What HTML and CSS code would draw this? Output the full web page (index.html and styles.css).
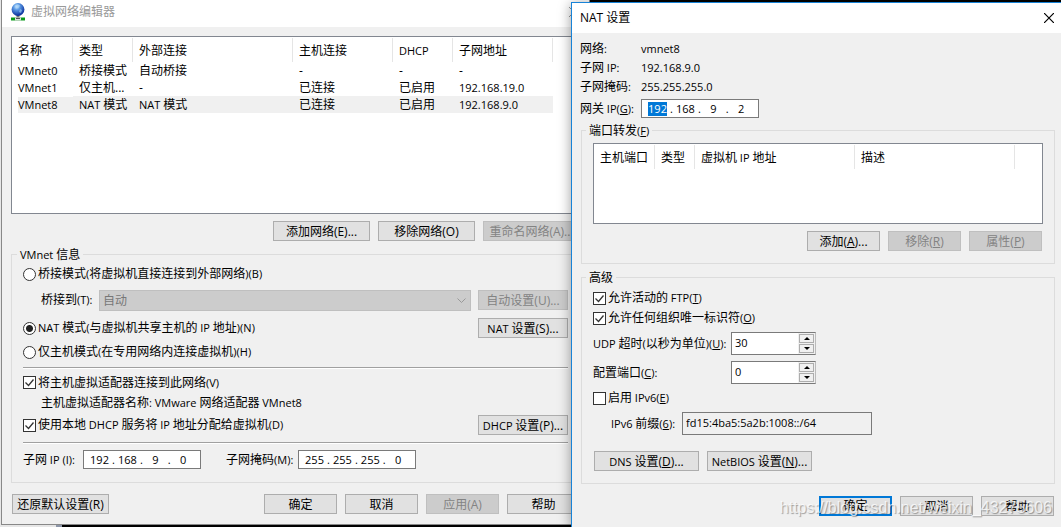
FILE: index.html
```html
<!DOCTYPE html>
<html lang="zh-CN">
<head>
<meta charset="utf-8">
<title>虚拟网络编辑器</title>
<link rel="stylesheet" href="styles.css">
</head>
<body>
<div class="desktop">
  <main class="window editor">
    <header class="titlebar">
      <svg class="app-icon" width="16" height="18" viewBox="0 0 16 18" aria-hidden="true">
        <defs>
          <radialGradient id="globe" cx="40%" cy="28%" r="70%">
            <stop offset="0" stop-color="#d4ecff"/><stop offset=".35" stop-color="#5b9be6"/><stop offset="1" stop-color="#0a2f9c"/>
          </radialGradient>
        </defs>
        <path d="M1 16h14" stroke="#0c9a1c" stroke-width="3"/>
        <path d="M8 11v5" stroke="#777" stroke-width="3"/>
        <path d="M5 16h6" stroke="#ddd" stroke-width="3"/>
        <path d="M6 15.5h4" stroke="#555" stroke-width="1"/>
        <circle cx="8" cy="6.5" r="6.4" fill="url(#globe)"/>
        <path d="M5 2.5q3-2 5 0l-1 2-3 1zM10 6l2 1-1 3-2-1z" fill="#a9d4f7" opacity=".6"/>
      </svg>
      <h1>虚拟网络编辑器</h1>
      <button class="close" aria-label="关闭"><svg width="10" height="10" viewBox="0 0 10 10"><path d="M0 0l10 10M10 0L0 10" stroke="currentColor"/></svg></button>
    </header>
    <div class="editor-body">
      <div class="list networks">
        <table>
          <thead><tr><th class="w-60">名称</th><th class="w-60">类型</th><th class="w-160">外部连接</th><th class="w-100">主机连接</th><th class="w-60"><span class="en">DHCP</span></th><th class="w-100">子网地址</th></tr></thead>
          <tbody>
            <tr><td><span class="en">VMnet0</span></td><td>桥接模式</td><td>自动桥接</td><td>-</td><td>-</td><td>-</td></tr>
            <tr><td><span class="en">VMnet1</span></td><td>仅主机...</td><td>-</td><td>已连接</td><td>已启用</td><td><span class="en">192.168.19.0</span></td></tr>
            <tr class="selected"><td><span class="en">VMnet8</span></td><td><span class="en">NAT </span>模式</td><td><span class="en">NAT </span>模式</td><td>已连接</td><td>已启用</td><td><span class="en">192.168.9.0</span></td></tr>
          </tbody>
        </table>
      </div>
      <div class="actions list-actions">
        <button class="btn wide">添加网络<span class="en">(E)...</span></button>
        <button class="btn wide">移除网络<span class="en">(O)</span></button>
        <button class="btn wide" disabled>重命名网络<span class="en">(A)...</span></button>
      </div>
      <fieldset class="group vmnet">
        <legend><span class="en">VMnet </span>信息</legend>
        <div class="row bridge-mode"><label class="choice"><input type="radio" name="mode">桥接模式<span class="en">(</span>将虚拟机直接连接到外部网络<span class="en">)(B)</span></label></div>
        <div class="row bridge-target">
          <label for="bridge">桥接到<span class="en">(T):</span></label>
          <select id="bridge" disabled><option>自动</option></select>
          <button class="btn side" disabled>自动设置<span class="en">(U)...</span></button>
        </div>
        <div class="row">
          <label class="choice"><input type="radio" name="mode" checked><span><span class="en">NAT </span>模式<span class="en">(</span>与虚拟机共享主机的<span class="en"> IP </span>地址<span class="en">)(N)</span></span></label>
          <button class="btn side"><span class="en">NAT </span>设置<span class="en">(S)...</span></button>
        </div>
        <div class="row host-mode"><label class="choice"><input type="radio" name="mode">仅主机模式<span class="en">(</span>在专用网络内连接虚拟机<span class="en">)(H)</span></label></div>
        <hr>
        <div class="row adapter"><label class="choice"><input type="checkbox" checked>将主机虚拟适配器连接到此网络<span class="en">(V)</span></label></div>
        <p class="adapter-name">主机虚拟适配器名称<span class="en">: VMware </span>网络适配器<span class="en"> VMnet8</span></p>
        <div class="row">
          <label class="choice"><input type="checkbox" checked><span>使用本地<span class="en"> DHCP </span>服务将<span class="en"> IP </span>地址分配给虚拟机<span class="en">(D)</span></span></label>
          <button class="btn side"><span class="en">DHCP </span>设置<span class="en">(P)...</span></button>
        </div>
        <hr class="lower">
        <div class="row subnet">
          <label for="ip1">子网<span class="en"> IP (I):</span></label>
          <div class="ip"><input id="ip1" value="192">.<input aria-label="子网 IP 2" value="168">.<input aria-label="子网 IP 3" value="9">.<input aria-label="子网 IP 4" value="0"></div>
          <label class="mask" for="mask1">子网掩码<span class="en">(M):</span></label>
          <div class="ip"><input id="mask1" value="255">.<input aria-label="子网掩码 2" value="255">.<input aria-label="子网掩码 3" value="255">.<input aria-label="子网掩码 4" value="0"></div>
        </div>
      </fieldset>
      <footer class="actions editor-footer">
        <button class="btn wide restore">还原默认设置<span class="en">(R)</span></button>
        <button class="btn">确定</button>
        <button class="btn">取消</button>
        <button class="btn" disabled>应用<span class="en">(A)</span></button>
        <button class="btn">帮助</button>
      </footer>
    </div>
  </main>

  <section class="window nat" aria-labelledby="nat-title">
    <header class="titlebar">
      <h2 id="nat-title">NAT 设置</h2>
      <button class="close" aria-label="关闭"><svg width="10" height="10" viewBox="0 0 10 10"><path d="M0 0l10 10M10 0L0 10" stroke="currentColor" stroke-width="1.2"/></svg></button>
    </header>
    <div class="nat-body">
      <dl class="facts">
        <dt>网络<span class="en">:</span></dt><dd class="en">vmnet8</dd>
        <dt>子网<span class="en"> IP:</span></dt><dd class="en">192.168.9.0</dd>
        <dt>子网掩码<span class="en">:</span></dt><dd class="en">255.255.255.0</dd>
      </dl>
      <div class="row gateway">
        <label for="gw1">网关<span class="en"> IP(<u>G</u>):</span></label>
        <div class="ip"><input id="gw1" class="marked" value="192">.<input aria-label="网关 IP 2" value="168">.<input aria-label="网关 IP 3" value="9">.<input aria-label="网关 IP 4" value="2"></div>
      </div>
      <fieldset class="group forwarding">
        <legend>端口转发<span class="en">(<u>F</u>)</span></legend>
        <div class="list ports">
          <table>
            <thead><tr><th class="w-60">主机端口</th><th class="w-40">类型</th><th class="w-160">虚拟机<span class="en"> IP </span>地址</th><th class="w-160">描述</th></tr></thead>
          </table>
        </div>
        <div class="actions port-actions">
          <button class="btn">添加<span class="en">(<u>A</u>)...</span></button>
          <button class="btn" disabled>移除<span class="en">(<u>R</u>)</span></button>
          <button class="btn" disabled>属性<span class="en">(<u>P</u>)</span></button>
        </div>
      </fieldset>
      <fieldset class="group advanced">
        <legend>高级</legend>
        <div class="row"><label class="choice"><input type="checkbox" checked><span>允许活动的<span class="en"> FTP(<u>T</u>)</span></span></label></div>
        <div class="row"><label class="choice"><input type="checkbox" checked>允许任何组织唯一标识符<span class="en">(<u>O</u>)</span></label></div>
        <div class="row field">
          <label for="udp"><span class="en">UDP </span>超时<span class="en">(</span>以秒为单位<span class="en">)(<u>U</u>):</span></label>
          <div class="spin"><input id="udp" value="30"><div class="steps"><button class="up" aria-label="增加"></button><button class="down" aria-label="减少"></button></div></div>
        </div>
        <div class="row field port">
          <label for="port">配置端口<span class="en">(<u>C</u>):</span></label>
          <div class="spin"><input id="port" value="0"><div class="steps"><button class="up" aria-label="增加"></button><button class="down" aria-label="减少"></button></div></div>
        </div>
        <div class="row ipv6"><label class="choice"><input type="checkbox"><span>启用<span class="en"> IPv6(<u>E</u>)</span></span></label></div>
        <div class="row prefix">
          <label for="prefix"><span class="en">IPv6 </span>前缀<span class="en">(<u>6</u>):</span></label>
          <input id="prefix" class="prefix-box" readonly value="fd15:4ba5:5a2b:1008::/64">
        </div>
        <div class="row extra">
          <button class="btn large"><span class="en">DNS </span>设置<span class="en">(<u>D</u>)...</span></button>
          <button class="btn large"><span class="en">NetBIOS </span>设置<span class="en">(<u>N</u>)...</span></button>
        </div>
      </fieldset>
      <footer class="actions nat-footer">
        <button class="btn default">确定</button>
        <button class="btn">取消</button>
        <button class="btn">帮助</button>
      </footer>
    </div>
  </section>
  <div class="watermark">https://blog.csdn.net/weixin_43275606</div>
</div>
</body>
</html>
```

FILE: styles.css
```css
* { box-sizing: border-box; }

body {
  margin: 0;
  overflow: hidden;
  color: #000;
  font: 12px/16px "Open Sans", "Noto Sans CJK SC", sans-serif;
}

button, input, select { font: inherit; color: inherit; margin: 0; }
h1, h2, p, dl, dd { margin: 0; font-size: 12px; font-weight: 400; }

.en { font-size: 11px; white-space: pre; }
u { text-underline-offset: 1px; }

.desktop {
  position: relative;
  display: grid;
  grid-template-columns: 571px minmax(0, 1fr);
  align-items: start;
  min-height: 100vh;
  overflow: hidden;
  background: linear-gradient(90deg, #e6e6e6 0 56px, #8d96a8 56px 62px, #000 62px);
}

.window { background: #f0f0f0; white-space: nowrap; }
.titlebar { display: flex; align-items: center; background: #fff; }
.close { display: flex; margin-left: auto; padding: 0; border: 0; background: none; }

/* Editor window: its right edge runs under the NAT dialog */
.editor {
  width: calc(100% + 18px);
  margin-left: 1px;
  border: solid #888;
  border-width: 0 1px 1px;
}
.editor .titlebar { height: 27px; padding: 0 10px 3px 8px; color: #999; gap: 5px; }
.editor-body { padding: 9px 9px 10px; }

.list { border: 1px solid #828790; background: #fff; padding-top: 1px; }
.networks { height: 178px; }
.ports { height: 81px; }

table { border-collapse: separate; border-spacing: 0; table-layout: fixed; width: 0; }
th, td { padding: 1px 0 0 6px; text-align: left; font-weight: 400; line-height: 16px; overflow: hidden; }
th { height: 24px; border-right: 1px solid #e5e5e5; }
td { height: 17px; }
.selected td { background: #f0f0f0; }
.selected td:first-child { background-clip: content-box; }
.w-40 { width: 40px; }
.w-60 { width: 60px; }
.w-100 { width: 100px; }
.w-160 { width: 160px; }
th:first-child { width: 61px; }

.actions { display: flex; justify-content: flex-end; gap: 8px; }
.list-actions { margin-top: 7px; }

.btn {
  width: 73px;
  height: 20px;
  padding: 1px 0 0;
  border: 1px solid #adadad;
  background: #e1e1e1;
  line-height: 16px;
  white-space: nowrap;
}
.btn .en:last-child { font-size: 12px; }
.btn.wide { width: 97px; }
.btn.side { width: 90px; margin-left: auto; }
.btn.large { width: 105px; }
.btn.default { padding: 0; border: 2px solid #0078d7; }
.btn:disabled { border-color: #bfbfbf; background: #ccc; color: #838383; }

.group { min-width: 0; margin: 0; border: 1px solid #dcdcdc; }
.group legend { padding: 0 3px; height: 16px; line-height: 18px; margin-left: -7px; }
.vmnet { margin-top: 5px; padding: 0 11px 13px; }
.vmnet legend { margin-left: -6px; }
.row { display: flex; align-items: center; min-height: 20px; }

.choice { display: flex; align-items: center; white-space: nowrap; }
.choice input {
  appearance: none;
  flex: none;
  width: 13px;
  height: 13px;
  margin-right: 2px;
  border: 1px solid #333;
  background: #fff;
}
.choice input[type="radio"] { border-radius: 50%; }
.choice input[type="radio"]:checked { background: radial-gradient(circle, #222 0 3px, #fff 4px); }
.choice input[type="checkbox"]:checked {
  background: #fff url("data:image/svg+xml,%3Csvg xmlns='http://www.w3.org/2000/svg' viewBox='0 0 11 11'%3E%3Cpath d='M1.5 5.5l3 3 5-6' fill='none' stroke='%23333' stroke-width='1.3'/%3E%3C/svg%3E");
}

.bridge-mode { height: 24px; margin-bottom: 4px; }
.bridge-target { margin-bottom: 7px; padding-left: 18px; align-items: flex-start; }
.bridge-target label { width: 58px; line-height: 20px; }
.bridge-target select {
  flex: 1;
  appearance: none;
  height: 21px;
  margin-right: 7px;
  padding: 0 3px;
  border: 1px solid #bfbfbf;
  border-radius: 0;
  opacity: 1;
  color: #777;
  background: #ccc url("data:image/svg+xml,%3Csvg xmlns='http://www.w3.org/2000/svg' width='9' height='6'%3E%3Cpath d='M.5.5l4 4 4-4' fill='none' stroke='%23999'/%3E%3C/svg%3E") right 4px center no-repeat;
}
.bridge-target .btn { margin-left: 0; }
.host-mode { height: 28px; }
.adapter { height: 27px; }
.adapter-name { padding-left: 18px; line-height: 14px; margin-bottom: 5px; }

hr { height: 2px; margin: 1px 0 0; border: 0; border-top: 1px solid #a0a0a0; background: #fff; }
hr.lower { margin-top: 7px; }

.subnet { margin-top: 6px; min-height: 19px; }
.subnet label { width: 60px; }
.subnet .mask { width: 72px; margin-left: 25px; }

.ip {
  display: flex;
  align-items: center;
  width: 118px;
  height: 19px;
  padding-left: 3px;
  border: 1px solid #7a7a7a;
  background: #fff;
  font-size: 11px;
  line-height: 14px;
}
.ip input { width: 25px; height: 14px; padding: 0; border: 0; background: none; text-align: center; }
.ip .marked { width: 19px; margin: 0 3px; background: #0078d7; color: #fff; }

.editor-footer { margin-top: 11px; }
.restore { margin: 0 auto 0 1px; }

/* NAT dialog */
.nat {
  position: relative;
  min-height: calc(100vh - 2px);
  margin-top: 2px;
  border: solid #1883d7;
  border-width: 1px 0 0 1px;
  box-shadow: 0 2px 12px rgba(0, 0, 0, .4);
}
.nat .titlebar { height: 30px; padding: 0 7px 1px 8px; }
.nat-body { padding: 6px 6px 10px 8px; }
.facts { display: grid; grid-template-columns: 61px 1fr; line-height: 19px; }
.gateway { margin-top: 3px; min-height: 19px; }
.gateway label { width: 61px; }
.forwarding, .advanced { margin-left: 1px; padding: 0 11px 12px; }
.forwarding { margin-top: 4px; }
.ports { margin-top: 5px; }
.port-actions { margin-top: 7px; padding-right: 1px; }
.advanced { margin-top: 5px; }
.advanced legend { margin-bottom: 3px; }

.field { min-height: 23px; margin-top: 4px; }
.field.port { margin-top: 6px; }
.field label { width: 138px; }
.spin { display: flex; width: 85px; height: 23px; border: 1px solid #7a7a7a; border-right-color: #bbb; background: #fff; }
.spin input { flex: 1; min-width: 0; padding: 0 3px 2px; border: 0; background: none; font-size: 11px; }
.steps { display: grid; grid-template-rows: 1fr 1fr; gap: 1px; width: 17px; padding: 1px; background: #f0f0f0; }
.steps button { display: grid; place-items: center; min-height: 0; padding: 0; border: 1px solid #adadad; background: #f0f0f0; }
.steps button::before { content: ""; border: solid transparent; border-width: 0 3px 3px; border-bottom-color: #000; }
.steps .down::before { border-width: 3px 3px 0; border-top-color: #000; }

.ipv6 { margin-top: 4px; }
.prefix { margin-top: 4px; padding-left: 18px; }
.prefix label { width: 71px; }
.prefix-box { width: 190px; height: 23px; padding: 0 3px 2px; border: 1px solid #7a7a7a; background: #f0f0f0; font-size: 11px; }
.extra { gap: 8px; margin-top: 16px; padding-left: 1px; }
.nat-footer { margin-top: 12px; padding-right: 1px; }

.watermark {
  position: absolute;
  right: 9px;
  bottom: 10px;
  color: rgba(255, 255, 255, .75);
  font: 16px/18px "Liberation Sans", sans-serif;
  text-shadow: 1px 1px 1px rgba(0, 0, 0, .35);
  pointer-events: none;
}
```
